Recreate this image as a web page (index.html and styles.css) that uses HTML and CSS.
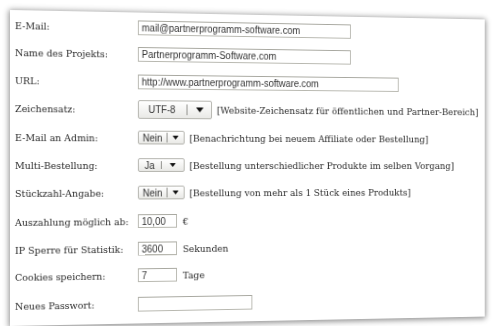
FILE: index.html
```html
<!DOCTYPE html>
<html lang="de">
<head>
<meta charset="utf-8">
<title>Einstellungen</title>
<link rel="stylesheet" href="styles.css">
</head>
<body>
<div class="sheet">
  <div class="row"><span class="label">E-Mail:</span><input class="in w-long" type="text" value="mail@partnerprogramm-software.com"></div>
  <div class="row r-27"><span class="label">Name des Projekts:</span><input class="in w-long" type="text" value="Partnerprogramm-Software.com"></div>
  <div class="row"><span class="label">URL:</span><input class="in w-url" type="text" value="http://www.partnerprogramm-software.com"></div>
  <div class="row r-29"><span class="label">Zeichensatz:</span><span class="sel sel-utf"><span class="sel-val">UTF-8</span><span class="sel-btn"><svg width="8" height="5" viewBox="0 0 8 5"><path d="M0 0H8L4 5Z" fill="#111"/></svg></span></span><span class="note">[Website-Zeichensatz für öffentlichen und Partner-Bereich]</span></div>
  <div class="row"><span class="label">E-Mail an Admin:</span><span class="sel sel-small"><span class="sel-val v-nein">Nein</span><span class="sel-btn"><svg width="7" height="4" viewBox="0 0 8 5"><path d="M0 0H8L4 5Z" fill="#111"/></svg></span></span><span class="note">[Benachrichtung bei neuem Affiliate oder Bestellung]</span></div>
  <div class="row"><span class="label">Multi-Bestellung:</span><span class="sel sel-small"><span class="sel-val v-ja">Ja</span><span class="sel-btn"><svg width="7" height="4" viewBox="0 0 8 5"><path d="M0 0H8L4 5Z" fill="#111"/></svg></span></span><span class="note">[Bestellung unterschiedlicher Produkte im selben Vorgang]</span></div>
  <div class="row"><span class="label">Stückzahl-Angabe:</span><span class="sel sel-small"><span class="sel-val v-nein">Nein</span><span class="sel-btn"><svg width="7" height="4" viewBox="0 0 8 5"><path d="M0 0H8L4 5Z" fill="#111"/></svg></span></span><span class="note">[Bestellung von mehr als 1 Stück eines Produkts]</span></div>
  <div class="row r-30"><span class="label">Auszahlung möglich ab:</span><input class="in w-short" type="text" value="10,00"><span class="unit">€</span></div>
  <div class="row r-26"><span class="label">IP Sperre für Statistik:</span><input class="in w-short" type="text" value="3600"><span class="unit">Sekunden</span></div>
  <div class="row"><span class="label">Cookies speichern:</span><input class="in w-short" type="text" value="7"><span class="unit">Tage</span></div>
  <div class="row r-30"><span class="label">Neues Passwort:</span><input class="in w-pass" type="password" value=""></div>
</div>
</body>
</html>
```

FILE: styles.css
```css
html, body {
  margin: 0;
  padding: 0;
  background: #fff;
}

body {
  padding: 10px 0 0 10px;
  font-family: "DejaVu Serif", serif;
  font-size: 9.6px;
  color: #2a2a2a;
}

.sheet {
  box-sizing: border-box;
  width: 509px;
  height: 316px;
  padding-top: 1px;
  background: #fff;
  box-shadow: 0 1px 6px 1px rgba(0, 0, 0, 0.45);
  transform-origin: 0 50%;
  transform: perspective(1000px) rotateY(7.2deg);
  display: flex;
  flex-direction: column;
}

.row {
  height: 28px;
  flex: none;
  display: flex;
  align-items: center;
  padding-left: 5px;
}

.r-26 { height: 26px; }
.r-27 { height: 27px; }
.r-29 { height: 29px; }
.r-30 { height: 30px; }

.label {
  width: 126px;
  flex: none;
  white-space: nowrap;
}

.in {
  box-sizing: border-box;
  height: 15px;
  margin: 0;
  padding: 0 3px;
  border: 1px solid #b8b8b0;
  border-top-color: #a8a8a0;
  background: #fff;
  font-family: "Liberation Sans", Arial, sans-serif;
  font-size: 10px;
  color: #333;
  outline: none;
}

.w-long { width: 228px; }
.w-url { width: 281px; }
.w-short { width: 41px; height: 14px; }
.w-pass { width: 121px; }

.unit {
  margin-left: 6px;
  white-space: nowrap;
}

.sel {
  box-sizing: border-box;
  display: inline-flex;
  align-items: stretch;
  height: 14px;
  border: 1px solid #b4b4ae;
  border-radius: 2px;
  background: linear-gradient(#ffffff, #e9e9e6);
  font-family: "Liberation Sans", Arial, sans-serif;
  font-size: 10px;
  color: #333;
  flex: none;
}

.sel-utf {
  width: 78px;
  height: 19px;
}

.sel-small {
  width: 49px;
}

.sel-val {
  display: flex;
  align-items: center;
  padding-left: 6px;
  border-right: 1px solid #8c8c88;
  margin: 2px 0;
}

.sel-utf .sel-val {
  width: 51px;
  padding-left: 10px;
  box-sizing: border-box;
  margin: 3px 0;
}

.v-nein {
  width: 30px;
  padding-left: 4px;
  box-sizing: border-box;
  margin: 1px 0;
}

.v-ja {
  width: 24px;
  padding-left: 6px;
  box-sizing: border-box;
}

.sel-btn {
  flex: 1;
  display: flex;
  align-items: center;
  justify-content: center;
}

.note {
  margin-left: 5px;
  white-space: nowrap;
}
```
